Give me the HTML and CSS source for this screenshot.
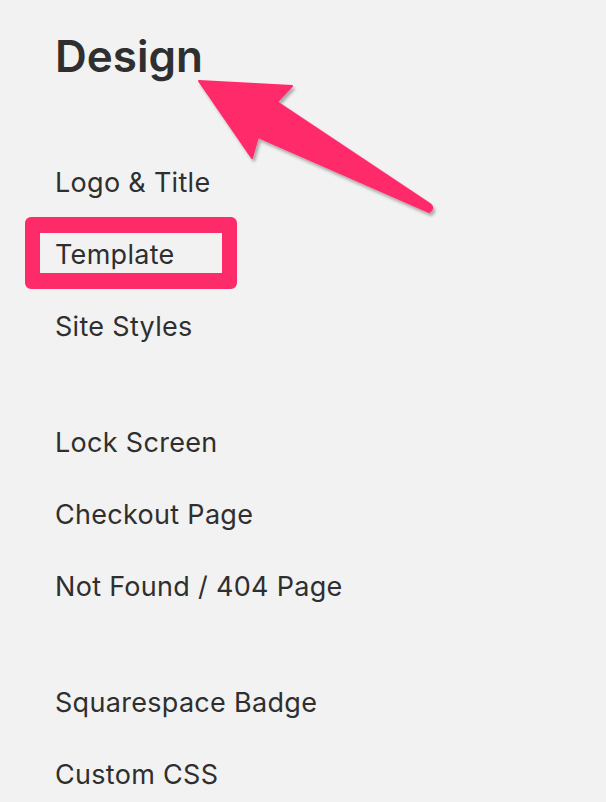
FILE: index.html
```html
<!DOCTYPE html>
<html lang="en">
<head>
    <meta charset="UTF-8">
    <meta name="viewport" content="width=device-width, initial-scale=1.0">
    <title>Design</title>
    <link rel="stylesheet" href="styles.css">
</head>
<body>
    <div id="panel">
        <h1 class="panel-title">Design</h1>

        <ul class="menu-group">
            <li class="menu-item">Logo &amp; Title</li>
            <li class="menu-item highlight">Template</li>
            <li class="menu-item">Site Styles</li>
        </ul>

        <ul class="menu-group">
            <li class="menu-item">Lock Screen</li>
            <li class="menu-item">Checkout Page</li>
            <li class="menu-item">Not Found / 404 Page</li>
        </ul>

        <ul class="menu-group">
            <li class="menu-item">Squarespace Badge</li>
            <li class="menu-item">Custom CSS</li>
        </ul>

        <!-- annotation arrow pointing at the heading -->
        <svg class="arrow" width="260" height="150" viewBox="0 0 260 150">
            <defs>
                <filter id="shadow" x="-20%" y="-20%" width="140%" height="140%">
                    <feDropShadow dx="2" dy="3" stdDeviation="1.5" flood-color="#000" flood-opacity="0.3"/>
                </filter>
            </defs>
            <path d="M9 11 L102 16 L87 32 L240 134 Q245 139 239 142 L68 67 L62 88 Z"
                  fill="#fe2b6a" stroke="#fe2b6a" stroke-width="2" stroke-linejoin="round" filter="url(#shadow)"/>
        </svg>
    </div>
</body>
</html>
```

FILE: styles.css
```css
body {
    margin: 0;
    background-color: #f2f2f2;
    font-family: Inter, "Noto Sans", sans-serif;
    color: #2f2f2f;
}

#panel {
    position: relative;
    height: 100vh;
    overflow: hidden;
    padding: 30px 0 0 55px;
    box-sizing: border-box;
}

.panel-title {
    margin: 0 0 65px;
    font-size: 44px;
    line-height: 52px;
    font-weight: 600;
}

.menu-group {
    list-style: none;
    margin: 0 0 44px;
    padding: 0;
}

.menu-group:last-of-type {
    margin-bottom: 0;
}

.menu-item {
    font-size: 27px;
    letter-spacing: 0.3px;
    line-height: 72px;
    height: 72px;
}

.highlight {
    position: relative;
}

.highlight::before {
    content: '';
    position: absolute;
    top: -2px;
    left: -30px;
    width: 212px;
    height: 72px;
    box-sizing: border-box;
    border: solid #fe2b6a;
    border-width: 16px 15px;
    border-radius: 6px;
}

.arrow {
    position: absolute;
    left: 190px;
    top: 70px;
}
```
